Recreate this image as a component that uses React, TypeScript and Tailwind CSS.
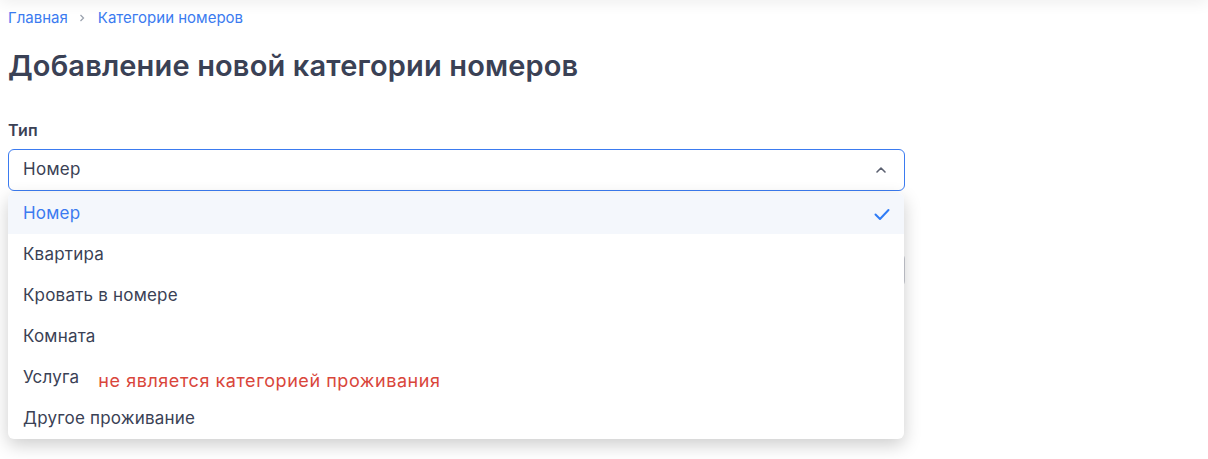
import React from "react";

const items = ["Номер", "Квартира", "Кровать в номере", "Комната", "Услуга", "Другое проживание"];

export default function App() {
  return (
    <div className="relative min-h-[459px] bg-white overflow-hidden" style={{ fontFamily: "Inter, 'Noto Sans', sans-serif" }}>
      <div className="absolute left-0 right-0 -top-2 h-2 shadow-[0_0_16px_rgba(0,0,0,0.12)]" />
      <div className="px-2">
        <nav className="flex items-center pt-[8px] text-[15px] leading-[20px] text-[#3b7bf0]">
          <span>Главная</span>
          <svg width="12" height="12" viewBox="0 0 12 12" fill="none" stroke="#9ca3af" strokeWidth="1.3" className="ml-[8px] mr-[10px]">
            <path d="M4.5 3l3 3-3 3" />
          </svg>
          <span>Категории номеров</span>
        </nav>
        <h1 className="mt-[18px] text-[29px] leading-[40px] font-semibold text-[#3a4155] tracking-[0.15px]">
          Добавление новой категории номеров
        </h1>
        <div className="mt-[34px] w-[897px]">
          <div className="text-[16px] leading-[20px] font-semibold text-[#3a4155] tracking-[0.3px]">Тип</div>
          <div className="relative mt-[9px]">
            <div className="flex h-[42px] items-center justify-between rounded-[6px] border border-[#3b7bf0] pl-[14px] pr-[16px] text-[17px] tracking-[0.3px] text-[#3a4155]">
              <span>Номер</span>
              <svg width="14" height="14" viewBox="0 0 14 14" fill="none" stroke="#5b6070" strokeWidth="1.6" strokeLinecap="round" strokeLinejoin="round">
                <path d="M3 9l4-4 4 4" />
              </svg>
            </div>
            <div className="mt-[30px] text-[16px] leading-[24px] font-semibold text-[#3a4155]">Название</div>
            <div className="mt-[8px] h-[34px] rounded-[6px] border border-[#c9ccd3]" />
            <div className="absolute left-0 top-[44px] w-[896px] overflow-hidden rounded-[6px] bg-white shadow-[0_6px_18px_rgba(0,0,0,0.2)]">
              {items.map((it, i) => (
                <div
                  key={it}
                  className={
                    "flex h-[41px] items-center pl-[15px] pr-[12px] text-[17px] tracking-[0.2px] " +
                    (i === 0 ? "bg-[#f4f7fc] text-[#3b7bf0]" : "text-[#3a4155]")
                  }
                >
                  <span>{it}</span>
                  {it === "Услуга" && (
                    <span className="ml-[19px] mt-[5px] text-[18px] tracking-[0.55px] text-[#d9463b]">не является категорией проживания</span>
                  )}
                  {i === 0 && (
                    <svg className="ml-auto" width="20" height="20" viewBox="0 0 20 20" fill="none" stroke="#2f7cf6" strokeWidth="2" strokeLinecap="round" strokeLinejoin="round">
                      <path d="M3.5 10.5l4.5 4.5 8.5-9" />
                    </svg>
                  )}
                </div>
              ))}
            </div>
          </div>
        </div>
      </div>
    </div>
  );
}
